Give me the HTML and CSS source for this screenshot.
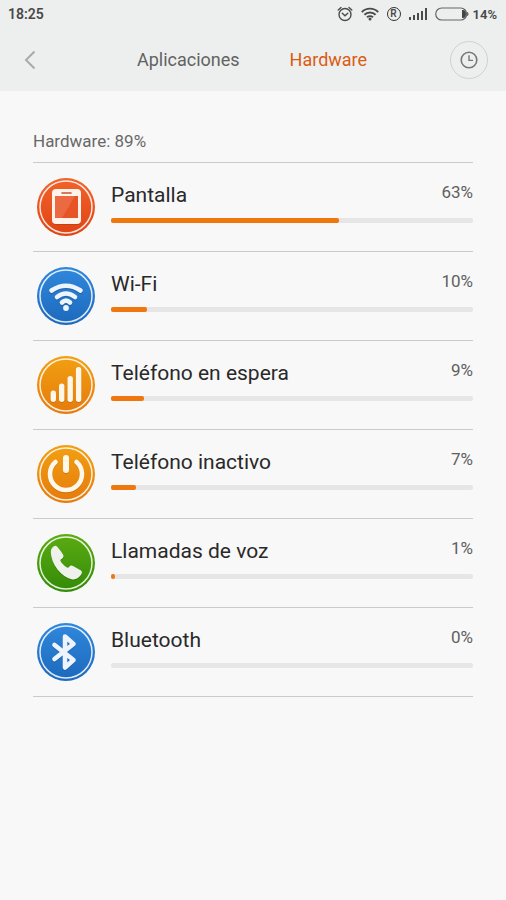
FILE: index.html
```html
<!DOCTYPE html>
<html lang="es">
<head>
<meta charset="utf-8">
<meta name="viewport" content="width=device-width, initial-scale=1">
<title>Batería</title>
<link rel="stylesheet" href="styles.css">
</head>
<body>
<svg class="defs" width="0" height="0" aria-hidden="true">
  <defs>
    <linearGradient id="red" x1="0" y1="0" x2="0" y2="1"><stop offset="0" stop-color="#f2632b"/><stop offset="1" stop-color="#df4414"/></linearGradient>
    <linearGradient id="blue" x1="0" y1="0" x2="0" y2="1"><stop offset="0" stop-color="#3088dc"/><stop offset="1" stop-color="#1c69bd"/></linearGradient>
    <linearGradient id="orange" x1="0" y1="0" x2="0" y2="1"><stop offset="0" stop-color="#f2a012"/><stop offset="1" stop-color="#e57a0c"/></linearGradient>
    <linearGradient id="green" x1="0" y1="0" x2="0" y2="1"><stop offset="0" stop-color="#5cac12"/><stop offset="1" stop-color="#338a06"/></linearGradient>
  </defs>
</svg>
<header class="top">
  <div class="status">
    <span class="time">18:25</span>
    <div class="status-icons">
      <svg width="16" height="16" viewBox="0 0 16 16" fill="none" stroke="#4b4b4b" stroke-width="1.4" stroke-linecap="round" aria-hidden="true"><circle cx="8" cy="8.5" r="6"/><path d="M5.3 7.2 8 9.8l2.8-2.6M1.2 4 4 1.500M14.800 4 12 1.500"/></svg>
      <svg width="18" height="14" viewBox="0 0 18 14" fill="none" stroke="#4b4b4b" stroke-width="1.9" aria-hidden="true"><path d="M.8 5.1a11.500 11.500 0 0 1 16.400 0M3.400 7.800a8 8 0 0 1 11.200 0M6 10.300a4.400 4.400 0 0 1 6 0"/><circle cx="9" cy="12" r="1.500" fill="#4b4b4b" stroke="none"/></svg>
      <span class="roaming">R</span>
      <svg width="18" height="14" viewBox="0 0 18 14" fill="#4b4b4b" aria-hidden="true"><path d="M0 10h2v3H0zM4 8h2v5H4zM8 6h2v7H8zM12 4h2v9h-2zM16 1h2v12h-2z"/></svg>
      <svg width="34" height="14" viewBox="0 0 34 14" aria-hidden="true"><rect x=".7" y="1" width="31" height="12" rx="6" fill="none" stroke="#666" stroke-width="1.2"/><path d="M27 3v8h1q3 0 3-4t-3-4z" fill="#444"/><path d="M32 5q1.600 0 1.600 2T32 9z" fill="#666"/></svg>
      <span>14%</span>
    </div>
  </div>
  <div class="bar">
    <button class="back" type="button" aria-label="Atrás"><svg width="12" height="20" viewBox="0 0 12 20" fill="none" stroke="#aaa" stroke-width="2"><path d="M10.500 1.500 2 10l8.500 8.500"/></svg></button>
    <nav class="tabs"><a href="#aplicaciones">Aplicaciones</a><a class="active" href="#hardware" aria-current="page">Hardware</a></nav>
    <button class="history" type="button" aria-label="Historial"><svg width="18" height="18" viewBox="0 0 18 18" fill="none" stroke="#777" stroke-width="1.6"><circle cx="9" cy="9" r="7.8"/><path d="M9 4.200V9.400h4" stroke-width="1.4"/></svg></button>
  </div>
</header>
<main class="content" id="hardware">
  <h1 class="summary">Hardware: 89%</h1>
  <ul class="list">
    <li class="item">
      <svg class="icon" viewBox="0 0 58 58" aria-hidden="true"><circle cx="29" cy="29" r="29" fill="url(#red)"/><circle class="ring" cx="29" cy="29" r="26"/><rect x="15" y="12" width="29" height="35" rx="4" fill="#a52f0c" opacity=".4"/><rect x="15" y="11" width="29" height="35" rx="4" fill="#fff3ec"/><rect x="18" y="18" width="23" height="22" fill="#e75425"/><path d="M18 18h20L25 40h-7z" fill="#ee7a55" opacity=".6"/><path d="M25 15h9" stroke="#c9532c" stroke-width="1.6" stroke-linecap="round"/></svg>
      <div class="info"><span class="name">Pantalla</span><span class="value">63%</span><div class="track"><div class="fill" style="width:63%"></div></div></div>
    </li>
    <li class="item">
      <svg class="icon" viewBox="0 0 58 58" aria-hidden="true"><circle cx="29" cy="29" r="29" fill="url(#blue)"/><circle class="ring" cx="29" cy="29" r="26"/><g fill="none" stroke="#113f7c" stroke-opacity=".35" stroke-width="5" stroke-linecap="round"><path d="M14.500 24.500q14.500-9.500 29 0M20 31q9-7 18 0M25 36.500q4-4 8 0"/></g><g fill="none" stroke="#edf4fc" stroke-width="4.600" stroke-linecap="round"><path d="M14.500 23.500q14.500-9.500 29 0M20 30q9-7 18 0M25 35.500q4-4 8 0"/></g><circle cx="29" cy="41" r="2.900" fill="#edf4fc"/></svg>
      <div class="info"><span class="name">Wi-Fi</span><span class="value">10%</span><div class="track"><div class="fill" style="width:10%"></div></div></div>
    </li>
    <li class="item">
      <svg class="icon" viewBox="0 0 58 58" aria-hidden="true"><circle cx="29" cy="29" r="29" fill="url(#orange)"/><circle class="ring" cx="29" cy="29" r="26"/><g fill="none" stroke-width="5.400" stroke-linecap="round"><path d="M16.300 38.200v6M24.700 31.200v13M33.200 23.700v20.500M41.600 14.700v29.500" stroke="#a85406" stroke-opacity=".4"/><path d="M16.300 37.200v6M24.700 30.200v13M33.200 22.700v20.500M41.600 13.700v29.500" stroke="#fff8ea"/></g></svg>
      <div class="info"><span class="name">Teléfono en espera</span><span class="value">9%</span><div class="track"><div class="fill" style="width:9%"></div></div></div>
    </li>
    <li class="item">
      <svg class="icon" viewBox="0 0 58 58" aria-hidden="true"><circle cx="29" cy="29" r="29" fill="url(#orange)"/><circle class="ring" cx="29" cy="29" r="26"/><g fill="none" stroke-linecap="round"><path d="M18.500 18a16 16 0 1 0 21 0" stroke="#a85406" stroke-opacity=".4" stroke-width="4.600"/><path d="M18.500 17a16 16 0 1 0 21 0" stroke="#fff8ea" stroke-width="4.600"/><path d="M29 14v12" stroke="#a85406" stroke-opacity=".4" stroke-width="6"/><path d="M29 13v12" stroke="#fff8ea" stroke-width="6"/></g></svg>
      <div class="info"><span class="name">Teléfono inactivo</span><span class="value">7%</span><div class="track"><div class="fill" style="width:7%"></div></div></div>
    </li>
    <li class="item">
      <svg class="icon" viewBox="0 0 58 58" aria-hidden="true"><circle cx="29" cy="29" r="29" fill="url(#green)"/><circle class="ring" cx="29" cy="29" r="26"/><path d="M15 14Q18 10.500 20 12.500Q24 17 26.300 21Q27 23 25.500 24.200L23.500 25.800Q23 27 24.500 28.700Q28 32.800 30.500 33.800Q31.600 34 32.300 32.800Q33.500 30.800 36 32L44 36.600Q45.800 37.800 44.500 40Q40.500 46.500 34.500 45.200Q27 43.500 20.500 35.500Q14 27 13.800 18Q13.700 15.500 15 14z" transform="translate(0 1)" fill="#1f5a04" opacity=".4"/><path d="M15 14Q18 10.500 20 12.500Q24 17 26.300 21Q27 23 25.500 24.200L23.500 25.800Q23 27 24.500 28.700Q28 32.800 30.500 33.800Q31.600 34 32.300 32.800Q33.500 30.800 36 32L44 36.600Q45.800 37.800 44.500 40Q40.500 46.500 34.500 45.200Q27 43.500 20.500 35.500Q14 27 13.800 18Q13.700 15.500 15 14z" fill="#eef2ea"/></svg>
      <div class="info"><span class="name">Llamadas de voz</span><span class="value">1%</span><div class="track"><div class="fill" style="width:1%"></div></div></div>
    </li>
    <li class="item">
      <svg class="icon" viewBox="0 0 58 58" aria-hidden="true"><circle cx="29" cy="29" r="29" fill="url(#blue)"/><circle class="ring" cx="29" cy="29" r="26"/><g fill="none" stroke-width="4.600" stroke-linecap="round" stroke-linejoin="round"><path d="M17.500 23 36.500 38 28 45.500V14.500L36.500 22 17.500 37" stroke="#113f7c" stroke-opacity=".35"/><path d="M17.500 22 36.500 37 28 44.500V13.500L36.500 21 17.500 36" stroke="#edf4fc"/></g></svg>
      <div class="info"><span class="name">Bluetooth</span><span class="value">0%</span><div class="track"><div class="fill" style="width:0%"></div></div></div>
    </li>
  </ul>
</main>
</body>
</html>
```
FILE: styles.css
```css
* {
  box-sizing: border-box;
}

body {
  margin: 0;
  min-height: 100vh;
  background: #f8f8f8;
  color: #292929;
  font-family: Roboto, "Liberation Sans", sans-serif;
}

.defs {
  position: absolute;
}

svg {
  display: block;
}

.top {
  background: #edefee;
}

.status {
  display: flex;
  align-items: center;
  justify-content: space-between;
  height: 28px;
  padding: 0 9px 0 8px;
  color: #484848;
  font-size: 13px;
  font-weight: 600;
}

.time {
  font-size: 14px;
}

.status-icons {
  display: flex;
  align-items: center;
  gap: 8px;
}

.status-icons > :last-child {
  margin-left: -4px;
}

.roaming {
  display: grid;
  place-items: center;
  width: 14px;
  height: 14px;
  border: 1px solid #333;
  border-radius: 50%;
  font-size: 10px;
  line-height: 12px;
}

.bar {
  display: grid;
  grid-template-columns: 1fr auto 1fr;
  align-items: center;
  height: 63px;
  padding: 0 18px 0 16px;
}

.back,
.history {
  display: grid;
  place-items: center;
  padding: 0;
  border: 0;
  background: none;
}

.back {
  width: 28px;
  height: 38px;
}

.history {
  justify-self: end;
  width: 38px;
  height: 38px;
  border: 1px solid #cfd1d0;
  border-radius: 50%;
}

.tabs {
  display: flex;
  gap: 50px;
  font-size: 18px;
  line-height: 24px;
}

.tabs a {
  color: #626262;
  text-decoration: none;
}

.tabs .active {
  color: #da5c13;
}

.content {
  padding: 40px 33px 0;
}

.summary {
  margin: 0;
  padding-bottom: 11px;
  border-bottom: 1px solid #cbcbcb;
  color: #686868;
  font-size: 17px;
  font-weight: 400;
  line-height: 20px;
}

.list {
  margin: 0;
  padding: 0;
  list-style: none;
}

.item {
  display: flex;
  gap: 16px;
  padding: 15px 0 15px 4px;
  border-bottom: 1px solid #cbcbcb;
}

.icon {
  flex: none;
  width: 58px;
  height: 58px;
}

.ring {
  fill: none;
  stroke: #fff;
  stroke-opacity: .85;
  stroke-width: 1.5;
}

.info {
  flex: 1;
  display: grid;
  grid-template-columns: 1fr auto;
  align-content: start;
  row-gap: 10px;
  padding-top: 4px;
}

.name {
  font-size: 21px;
  line-height: 26px;
}

.value {
  color: #606060;
  font-size: 17px;
  line-height: 20px;
}

.track {
  grid-column: 1 / -1;
  height: 5px;
  border-radius: 2px;
  background: #e6e6e6;
}

.fill {
  height: 100%;
  border-radius: 2px;
  background: #ef770e;
}
```
